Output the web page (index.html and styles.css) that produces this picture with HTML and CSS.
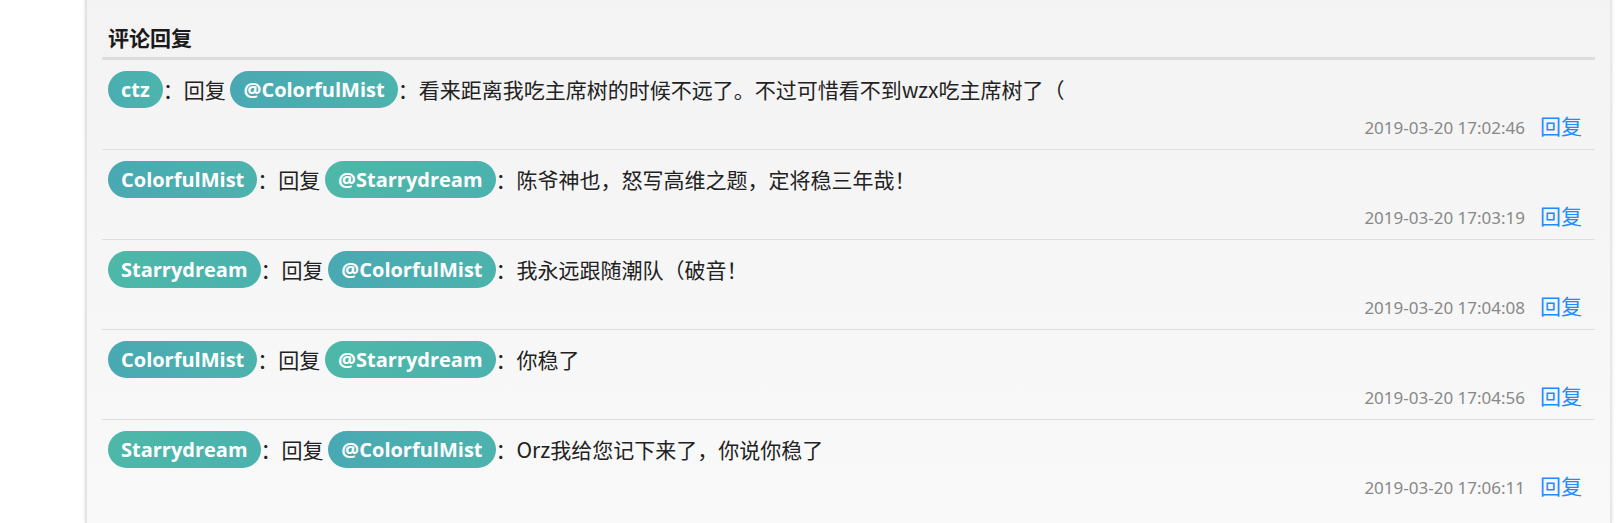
FILE: index.html
```html
<!DOCTYPE html>
<html lang="zh-CN">
<head>
<meta charset="utf-8">
<title>评论回复</title>
<link rel="stylesheet" href="styles.css">
</head>
<body>
<div class="panel">
  <div class="panel-title">评论回复</div>
  <ul class="replies">
    <li class="reply">
      <div class="reply-body"><span class="pill user-ctz">ctz</span><span class="sep">：</span>回复 <span class="pill user-mist">@ColorfulMist</span><span class="sep">：</span>看来距离我吃主席树的时候不远了。不过可惜看不到wzx吃主席树了（</div>
      <div class="reply-meta"><span class="date">2019-03-20 17:02:46</span><a class="reply-link">回复</a></div>
    </li>
    <li class="reply">
      <div class="reply-body"><span class="pill user-mist">ColorfulMist</span><span class="sep">：</span>回复 <span class="pill user-star">@Starrydream</span><span class="sep">：</span>陈爷神也，怒写高维之题，定将稳三年哉！</div>
      <div class="reply-meta"><span class="date">2019-03-20 17:03:19</span><a class="reply-link">回复</a></div>
    </li>
    <li class="reply">
      <div class="reply-body"><span class="pill user-star">Starrydream</span><span class="sep">：</span>回复 <span class="pill user-mist">@ColorfulMist</span><span class="sep">：</span>我永远跟随潮队（破音！</div>
      <div class="reply-meta"><span class="date">2019-03-20 17:04:08</span><a class="reply-link">回复</a></div>
    </li>
    <li class="reply">
      <div class="reply-body"><span class="pill user-mist">ColorfulMist</span><span class="sep">：</span>回复 <span class="pill user-star">@Starrydream</span><span class="sep">：</span>你稳了</div>
      <div class="reply-meta"><span class="date">2019-03-20 17:04:56</span><a class="reply-link">回复</a></div>
    </li>
    <li class="reply">
      <div class="reply-body"><span class="pill user-star">Starrydream</span><span class="sep">：</span>回复 <span class="pill user-mist">@ColorfulMist</span><span class="sep">：</span>Orz我给您记下来了，你说你稳了</div>
      <div class="reply-meta"><span class="date">2019-03-20 17:06:11</span><a class="reply-link">回复</a></div>
    </li>
  </ul>
</div>
</body>
</html>
```
FILE: styles.css
```css
html, body {
  margin: 0;
  padding: 0;
  background: #ffffff;
}

body {
  font-family: "Open Sans", "Noto Sans CJK SC", sans-serif;
  color: #222222;
}

.panel {
  box-sizing: border-box;
  margin-left: 85px;
  width: 1527px;
  height: 523px;
  overflow: hidden;
  padding: 0 15px;
  background: linear-gradient(to bottom, #f3f3f3, #f9f9f9);
  border-left: 2px solid #e4e4e4;
  border-right: 2px solid #e8e8e8;
  box-shadow: 0 0 3px rgba(0, 0, 0, 0.12);
}

.panel-title {
  padding: 22px 0 0 6px;
  height: 35px;
  line-height: 30px;
  font-size: 21px;
  font-weight: bold;
  font-family: "Noto Sans CJK SC", sans-serif;
  color: #1a1a1a;
  border-bottom: 3px solid #dddddd;
}

.replies {
  list-style: none;
  margin: 0;
  padding: 0;
}

.reply {
  padding: 11px 13px 9px 6px;
  border-bottom: 1px solid #dedede;
}

.reply:last-child {
  border-bottom: none;
}

.reply-body {
  height: 37px;
  line-height: 37px;
  font-size: 21px;
  font-family: "Noto Sans CJK SC", sans-serif;
  white-space: nowrap;
}

.sep {
  font-family: "Noto Sans CJK JP", sans-serif;
}

.pill {
  display: inline-block;
  height: 37px;
  line-height: 37px;
  padding: 0 13px;
  border-radius: 19px;
  color: #ffffff;
  font-family: "Open Sans", sans-serif;
  font-weight: bold;
  font-size: 20px;
  vertical-align: top;
}

.user-ctz {
  background: linear-gradient(to right, #4aaeb1, #4db4ad);
}

.user-mist {
  background: linear-gradient(to right, #49a9b3, #4db3ad);
}

.user-star {
  background: linear-gradient(to right, #4db8a8, #4bb2ae);
}

.reply-meta {
  margin-top: 2px;
  height: 30px;
  line-height: 30px;
  text-align: right;
}

.date {
  font-family: "Noto Sans", sans-serif;
  font-size: 17px;
  color: #888888;
}

.reply-link {
  margin-left: 15px;
  font-family: "Noto Sans CJK SC", sans-serif;
  font-size: 21px;
  color: #1e8cff;
  cursor: pointer;
}
```
